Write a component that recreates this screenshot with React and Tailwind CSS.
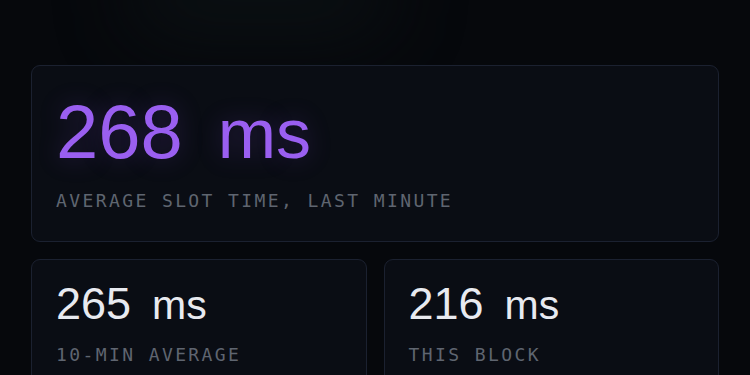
export default function App() {
  const sans = { fontFamily: '"Liberation Sans", Arial, sans-serif' };
  const mono = { fontFamily: '"DejaVu Sans Mono", monospace' };
  return (
    <div className="relative w-[750px] h-[375px] overflow-hidden bg-[#06080c]">
      <div className="absolute left-[130px] top-[-40px] w-[260px] h-[70px] rounded-full bg-[#0d1416] blur-2xl opacity-80" />
      <div className="relative flex flex-col gap-[17px] px-[31px] pt-[65px]">
        <div className="rounded-[9px] border border-[#1b2130] bg-[#0a0d14] h-[177px] pl-[24px] pt-[28px]">
          <div
            className="flex items-baseline text-[76px] leading-none text-[#9a5ff0] [text-shadow:0_0_24px_rgba(140,80,230,0.25)]"
            style={sans}
          >
            <span>268</span>
            <span className="ml-[35px] text-[70px]">ms</span>
          </div>
          <div
            className="mt-[22px] text-[18px] leading-none tracking-[2.4px] text-[#5f6570]"
            style={mono}
          >
            AVERAGE SLOT TIME, LAST MINUTE
          </div>
        </div>
        <div className="grid grid-cols-2 gap-[17px]">
          {[
            ["265", "10-MIN AVERAGE"],
            ["216", "THIS BLOCK"],
          ].map(([v, l]) => (
            <div
              key={l}
              className="rounded-[9px] border border-[#1b2130] bg-[#0a0d14] h-[140px] pl-[24px] pt-[21px]"
            >
              <div
                className="flex items-baseline text-[45px] leading-none text-[#e8eaf0]"
                style={sans}
              >
                <span>{v}</span>
                <span className="ml-[21px] text-[41px]">ms</span>
              </div>
              <div
                className="mt-[20px] text-[18px] leading-none tracking-[2.4px] text-[#5f6570]"
                style={mono}
              >
                {l}
              </div>
            </div>
          ))}
        </div>
      </div>
    </div>
  );
}
